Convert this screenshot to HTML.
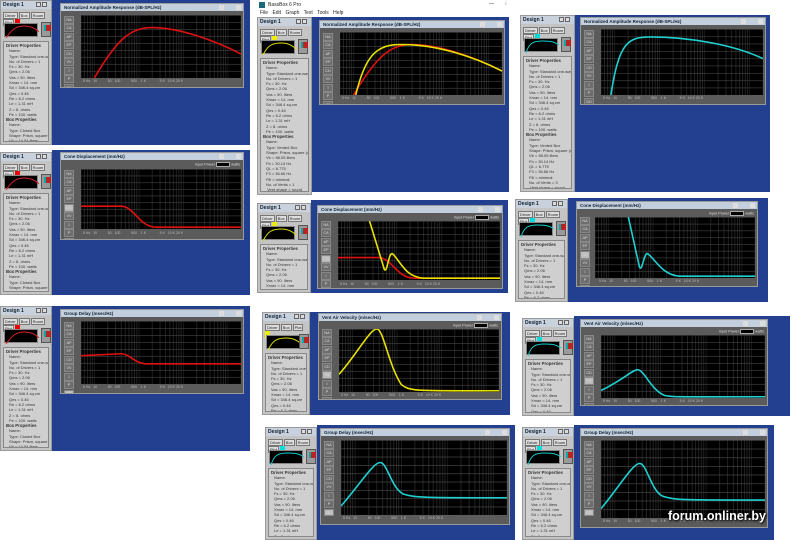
<!DOCTYPE html>
<html><head><meta charset="utf-8"><style>
*{margin:0;padding:0;box-sizing:border-box}
body{width:800px;height:540px;background:#fff;position:relative;overflow:hidden;font-family:"Liberation Sans",sans-serif}
.a{position:absolute}
.bl{position:absolute;background:#233f8f}
.sb{position:absolute;background:#c4c4c4;border:1px solid #9a9a9a;overflow:hidden}
.sb .t{height:8px;background:#c9d2dc;font-size:5px;font-weight:bold;line-height:8px;padding-left:2px;color:#123}
.sb .t i{position:absolute;top:1px;width:5px;height:5px;background:#ddd;border:1px solid #666}
.sb .bt{position:absolute;top:11px;left:2px;height:6px;font-size:4px;line-height:5px;color:#222}
.sb .bt span{display:inline-block;border:1px solid #777;background:#ddd;padding:0 1px;margin-right:1px}
.sb .th{position:absolute;top:22px;left:3px;width:34px;height:14px;background:#000;border:1px solid #888}
.sb .ic{position:absolute;top:21px;left:40px;width:10px;height:15px;background:#9a9a9a;border:1px solid #555}
.sb .ic:after{content:"";position:absolute;left:2px;top:2px;width:5px;height:6px;background:#b22;border-left:2px solid #0aa}
.sb .tx{position:absolute;top:40px;left:2px;right:2px;bottom:2px;background:#cfcfcf;border:1px solid #888;font-size:4px;line-height:5.3px;color:#333;padding:1px 5px 0 2px;white-space:nowrap;overflow:hidden}
.sb .tx b{display:block;font-size:4.3px}
.sb .tx p{padding-left:3px}
.win{position:absolute;background:#5b5b5b;box-shadow:inset 0 0 0 200px #5b5b5b;border:1px solid #9a9a9a;overflow:hidden}
.wt{height:7px;background:#c3cfdc;font-size:4.5px;font-weight:bold;line-height:7px;padding-left:3px;color:#123;position:relative}
.wt:after{content:"";position:absolute;right:2px;top:1px;width:12px;height:5px;border-left:5px solid #ddd;border-right:5px solid #ddd}
.win .bs{position:absolute;left:3px;top:12px;width:10px;font-size:3.8px;color:#ddd;text-align:center}
.win .bs div{height:7.6px;margin-bottom:0.9px;background:#6e6e6e;border:1px solid #888;line-height:6px}
.win .ip{position:absolute;right:3px;top:9px;font-size:3.8px;color:#ddd}
.win .ip span{display:inline-block;width:14px;height:5px;background:#000;border:1px solid #aaa;vertical-align:middle}
.win svg{position:absolute}
.win .ax{position:absolute;font-size:3.5px;color:#bbb;white-space:nowrap}
</style></head><body>
<svg width="0" height="0" style="position:absolute"><defs>
<pattern id="gv" patternUnits="userSpaceOnUse" width="100" height="100" patternTransform="translate(30.1 0)">
<g stroke="#3c3c3c" stroke-width="1.2"><line x1="0" y1="0" x2="0" y2="100" stroke="#555"/><line x1="30.1" y1="0" x2="30.1" y2="100"/><line x1="47.7" y1="0" x2="47.7" y2="100"/><line x1="60.2" y1="0" x2="60.2" y2="100"/><line x1="69.9" y1="0" x2="69.9" y2="100"/><line x1="77.8" y1="0" x2="77.8" y2="100"/><line x1="84.5" y1="0" x2="84.5" y2="100"/><line x1="90.3" y1="0" x2="90.3" y2="100"/><line x1="95.4" y1="0" x2="95.4" y2="100"/></g></pattern>
<pattern id="gh" patternUnits="userSpaceOnUse" width="360" height="11.1"><line x1="0" y1="0.5" x2="360" y2="0.5" stroke="#444" stroke-width="1"/></pattern>
</defs></svg>

<div class="a" style="left:252px;top:0;width:265px;height:17px;background:#fff"></div>
<div class="a" style="left:259px;top:2px;width:6px;height:6px;background:#1a6a7a"></div>
<div class="a" style="left:268px;top:2px;font-size:5px;color:#222">BassBox 6 Pro</div>
<div class="a" style="left:489px;top:1px;font-size:5px;color:#222">—&nbsp;&nbsp;&nbsp;&nbsp;&nbsp;&nbsp;&nbsp;&nbsp;⁝</div>
<div class="a" style="left:260px;top:10px;font-size:5px;color:#222;word-spacing:3px">File Edit Graph Text Tools Help</div>

<!-- P1 -->
<div class="bl" style="left:52px;top:0;width:198px;height:145px"></div>
<div class="sb" style="left:0;top:0;width:52px;height:145px"><div class="t">Design 1<i style="left:35px"></i><i style="left:41px"></i></div><div class="bt"><span>Driver</span><span>Box</span><span>Room</span><span>Plot</span><span style="background:#e00;border-color:#e00">&nbsp;</span></div><div class="th"><svg width="34" height="14" viewBox="0 0 34 14"><path d="M1,14 C8,4 12,2 20,2 C26,2 30,4 34,8" stroke="#d22" fill="none"/></svg></div><div class="ic"></div><div class="tx"><b>Driver Properties</b><p>Name:</p><p>Type: Standard one-way</p><p>No. of Drivers = 1</p><p>Fs = 30. Hz</p><p>Qms = 2.06</p><p>Vas = 90. liters</p><p>Xmax = 14. mm</p><p>Sd = 346.4 sq.cm</p><p>Qes = 0.46</p><p>Re = 6.2 ohms</p><p>Le = 1.31 mH</p><p>Z = 8. ohms</p><p>Pe = 100. watts</p><b>Box Properties</b><p>Name:</p><p>Type: Closed Box</p><p>Shape: Prism, square (opt</p><p>Vb = 14.54 liters</p><p>Qtc = 0.707</p><p>QL = 7.</p><p>F3 = 74.6 Hz</p></div></div>
<div class="win" style="left:60px;top:3px;width:184px;height:85px"><div class="wt">Normalized Amplitude Response (dB-SPL/Hz)</div><div class="bs"><div>NA</div><div>CA</div><div>AP</div><div>EP</div><div>CD</div><div>VV</div><div>I</div><div>P</div><div>GD</div></div>
<svg style="left:20px;top:11px" width="160" height="63" viewBox="0 0 360 100" preserveAspectRatio="none"><rect width="360" height="100" fill="#000"/><rect width="360" height="100" fill="url(#gv)"/><rect width="360" height="100" fill="url(#gh)"/><path d="M30,100 C80,40 110,20 160,20 C220,20 300,40 360,62" stroke="#e01010" stroke-width="1.6" fill="none" vector-effect="non-scaling-stroke"/></svg>
<div class="ax" style="left:22px;top:75px">5 Hz&nbsp;&nbsp;&nbsp;10&nbsp;&nbsp;&nbsp;&nbsp;&nbsp;&nbsp;&nbsp;&nbsp;&nbsp;&nbsp;&nbsp;50&nbsp;&nbsp;&nbsp;100&nbsp;&nbsp;&nbsp;&nbsp;&nbsp;&nbsp;&nbsp;&nbsp;&nbsp;&nbsp;&nbsp;500&nbsp;&nbsp;&nbsp;&nbsp;1 K&nbsp;&nbsp;&nbsp;&nbsp;&nbsp;&nbsp;&nbsp;&nbsp;&nbsp;&nbsp;&nbsp;&nbsp;&nbsp;&nbsp;5 K&nbsp;&nbsp;&nbsp;10 K 20 K</div></div>

<!-- P2 -->
<div class="bl" style="left:312px;top:17px;width:197px;height:175px"></div>
<div class="sb" style="left:257px;top:17px;width:55px;height:178px"><div class="t">Design 1<i style="left:38px"></i><i style="left:44px"></i></div><div class="bt"><span>Driver</span><span>Box</span><span>Room</span><span>Plot</span><span style="background:#ee0;border-color:#ee0">&nbsp;</span></div><div class="th"><svg width="34" height="14" viewBox="0 0 34 14"><path d="M1,14 C6,4 10,2 20,2 C26,2 30,4 34,8" stroke="#dd0" fill="none"/></svg></div><div class="ic"></div><div class="tx"><b>Driver Properties</b><p>Name:</p><p>Type: Standard one-way dri</p><p>No. of Drivers = 1</p><p>Fs = 30. Hz</p><p>Qms = 2.06</p><p>Vas = 90. liters</p><p>Xmax = 14. mm</p><p>Sd = 346.4 sq.cm</p><p>Qes = 0.46</p><p>Re = 6.2 ohms</p><p>Le = 1.31 mH</p><p>Z = 8. ohms</p><p>Pe = 100. watts</p><b>Box Properties</b><p>Name:</p><p>Type: Vented Box</p><p>Shape: Prism, square (optim</p><p>Vb = 58.05 liters</p><p>Fb = 30.14 Hz</p><p>QL = 6.775</p><p>F3 = 36.66 Hz</p><p>Fill = minimal</p><p>No. of Vents = 1</p><p>&nbsp;Vent shape = round</p><p>&nbsp;Vent ends = one flush</p><p>Dv = 50. mm</p><p>Lv = 66.34 mm</p></div></div>
<div class="win" style="left:319px;top:20px;width:186px;height:85px"><div class="wt">Normalized Amplitude Response (dB-SPL/Hz)</div><div class="bs"><div>NA</div><div>CA</div><div>AP</div><div>EP</div><div>CD</div><div>VV</div><div>I</div><div>P</div><div>GD</div></div>
<svg style="left:20px;top:11px" width="162" height="63" viewBox="0 0 360 100" preserveAspectRatio="none"><rect width="360" height="100" fill="#000"/><rect width="360" height="100" fill="url(#gv)"/><rect width="360" height="100" fill="url(#gh)"/><path d="M30,100 C80,40 110,20 160,20 C220,20 300,40 360,62" stroke="#e01010" stroke-width="1.6" fill="none" vector-effect="non-scaling-stroke"/><path d="M35,100 C55,40 80,20 130,20 C210,18 300,40 360,62" stroke="#e8e000" stroke-width="1.6" fill="none" vector-effect="non-scaling-stroke"/></svg>
<div class="ax" style="left:22px;top:75px">5 Hz&nbsp;&nbsp;&nbsp;10&nbsp;&nbsp;&nbsp;&nbsp;&nbsp;&nbsp;&nbsp;&nbsp;&nbsp;&nbsp;&nbsp;50&nbsp;&nbsp;&nbsp;100&nbsp;&nbsp;&nbsp;&nbsp;&nbsp;&nbsp;&nbsp;&nbsp;&nbsp;&nbsp;&nbsp;500&nbsp;&nbsp;&nbsp;&nbsp;1 K&nbsp;&nbsp;&nbsp;&nbsp;&nbsp;&nbsp;&nbsp;&nbsp;&nbsp;&nbsp;&nbsp;&nbsp;&nbsp;&nbsp;5 K&nbsp;&nbsp;&nbsp;10 K 20 K</div></div>

<!-- P3 -->
<div class="bl" style="left:575px;top:15px;width:195px;height:177px"></div>
<div class="sb" style="left:520px;top:15px;width:55px;height:177px"><div class="t">Design 1<i style="left:38px"></i><i style="left:44px"></i></div><div class="bt"><span>Driver</span><span>Box</span><span>Room</span><span>Plot</span><span style="background:#0dd;border-color:#0dd">&nbsp;</span></div><div class="th"><svg width="34" height="14" viewBox="0 0 34 14"><path d="M1,14 C4,4 8,2 18,2 C26,2 30,3 34,6" stroke="#1cc" fill="none"/></svg></div><div class="ic"></div><div class="tx"><b>Driver Properties</b><p>Name:</p><p>Type: Standard one-way dri</p><p>No. of Drivers = 1</p><p>Fs = 30. Hz</p><p>Qms = 2.06</p><p>Vas = 90. liters</p><p>Xmax = 14. mm</p><p>Sd = 346.4 sq.cm</p><p>Qes = 0.46</p><p>Re = 6.2 ohms</p><p>Le = 1.31 mH</p><p>Z = 8. ohms</p><p>Pe = 100. watts</p><b>Box Properties</b><p>Name:</p><p>Type: Vented Box</p><p>Shape: Prism, square (optim</p><p>Vb = 58.05 liters</p><p>Fb = 30.14 Hz</p><p>QL = 6.775</p><p>F3 = 36.66 Hz</p><p>Fill = minimal</p><p>No. of Vents = 3</p><p>&nbsp;Vent shape = round</p><p>&nbsp;Vent ends = one flush</p><p>Dv = 50. mm</p><p>Lv = 283.2 mm</p></div></div>
<div class="win" style="left:580px;top:17px;width:186px;height:88px"><div class="wt">Normalized Amplitude Response (dB-SPL/Hz)</div><div class="bs"><div>NA</div><div>CA</div><div>AP</div><div>EP</div><div>CD</div><div>VV</div><div>I</div><div>P</div><div>GD</div></div>
<svg style="left:20px;top:11px" width="162" height="66" viewBox="0 0 360 100" preserveAspectRatio="none"><rect width="360" height="100" fill="#000"/><rect width="360" height="100" fill="url(#gv)"/><rect width="360" height="100" fill="url(#gh)"/><path d="M22,100 C40,20 60,12 110,12 C200,12 300,25 360,45" stroke="#20d0d0" stroke-width="1.6" fill="none" vector-effect="non-scaling-stroke"/></svg>
<div class="ax" style="left:22px;top:78px">5 Hz&nbsp;&nbsp;&nbsp;10&nbsp;&nbsp;&nbsp;&nbsp;&nbsp;&nbsp;&nbsp;&nbsp;&nbsp;&nbsp;&nbsp;50&nbsp;&nbsp;&nbsp;100&nbsp;&nbsp;&nbsp;&nbsp;&nbsp;&nbsp;&nbsp;&nbsp;&nbsp;&nbsp;&nbsp;500&nbsp;&nbsp;&nbsp;&nbsp;1 K&nbsp;&nbsp;&nbsp;&nbsp;&nbsp;&nbsp;&nbsp;&nbsp;&nbsp;&nbsp;&nbsp;&nbsp;&nbsp;&nbsp;5 K&nbsp;&nbsp;&nbsp;10 K 20 K</div></div>

<!-- P4 -->
<div class="bl" style="left:52px;top:150px;width:198px;height:145px"></div>
<div class="sb" style="left:0;top:152px;width:52px;height:143px"><div class="t">Design 1<i style="left:35px"></i><i style="left:41px"></i></div><div class="bt"><span>Driver</span><span>Box</span><span>Room</span><span>Plot</span><span style="background:#e00;border-color:#e00">&nbsp;</span></div><div class="th"><svg width="34" height="14" viewBox="0 0 34 14"><path d="M1,14 C8,4 12,2 20,2 C26,2 30,4 34,8" stroke="#d22" fill="none"/></svg></div><div class="ic"></div><div class="tx"><b>Driver Properties</b><p>Name:</p><p>Type: Standard one-way</p><p>No. of Drivers = 1</p><p>Fs = 30. Hz</p><p>Qms = 2.06</p><p>Vas = 90. liters</p><p>Xmax = 14. mm</p><p>Sd = 346.4 sq.cm</p><p>Qes = 0.46</p><p>Re = 6.2 ohms</p><p>Le = 1.31 mH</p><p>Z = 8. ohms</p><p>Pe = 100. watts</p><b>Box Properties</b><p>Name:</p><p>Type: Closed Box</p><p>Shape: Prism, square (opt</p><p>Vb = 14.54 liters</p><p>Qtc = 0.707</p><p>QL = 7.</p><p>F3 = 74.6 Hz</p></div></div>
<div class="win" style="left:60px;top:152px;width:184px;height:88px"><div class="wt">Cone Displacement (mm/Hz)</div><div class="ip">Input Power <span></span> watts</div><div class="bs" style="top:17px"><div>NA</div><div>CA</div><div>AP</div><div>EP</div><div style="background:#bbb">CD</div><div>VV</div><div>I</div><div>P</div><div>GD</div></div>
<svg style="left:20px;top:16px" width="160" height="60" viewBox="0 0 360 100" preserveAspectRatio="none"><rect width="360" height="100" fill="#000"/><rect width="360" height="100" fill="url(#gv)"/><rect width="360" height="100" fill="url(#gh)"/><path d="M0,62 L90,62 C120,62 130,97 170,97 L360,97" stroke="#e01010" stroke-width="1.6" fill="none" vector-effect="non-scaling-stroke"/></svg>
<div class="ax" style="left:22px;top:78px">5 Hz&nbsp;&nbsp;&nbsp;10&nbsp;&nbsp;&nbsp;&nbsp;&nbsp;&nbsp;&nbsp;&nbsp;&nbsp;&nbsp;&nbsp;50&nbsp;&nbsp;&nbsp;100&nbsp;&nbsp;&nbsp;&nbsp;&nbsp;&nbsp;&nbsp;&nbsp;&nbsp;&nbsp;&nbsp;500&nbsp;&nbsp;&nbsp;&nbsp;1 K&nbsp;&nbsp;&nbsp;&nbsp;&nbsp;&nbsp;&nbsp;&nbsp;&nbsp;&nbsp;&nbsp;&nbsp;&nbsp;&nbsp;5 K&nbsp;&nbsp;&nbsp;10 K 20 K</div></div>

<!-- P5 -->
<div class="bl" style="left:311px;top:200px;width:197px;height:93px"></div>
<div class="sb" style="left:257px;top:203px;width:54px;height:90px"><div class="t">Design 1<i style="left:37px"></i><i style="left:43px"></i></div><div class="bt"><span>Driver</span><span>Box</span><span>Room</span><span>Plot</span><span style="background:#ee0;border-color:#ee0">&nbsp;</span></div><div class="th"><svg width="34" height="14" viewBox="0 0 34 14"><path d="M1,14 C6,4 10,2 20,2 C26,2 30,4 34,8" stroke="#dd0" fill="none"/></svg></div><div class="ic"></div><div class="tx"><b>Driver Properties</b><p>Name:</p><p>Type: Standard one-way dri</p><p>No. of Drivers = 1</p><p>Fs = 30. Hz</p><p>Qms = 2.06</p><p>Vas = 90. liters</p><p>Xmax = 14. mm</p><p>Sd = 346.4 sq.cm</p><p>Qes = 0.46</p><p>Re = 6.2 ohms</p></div></div>
<div class="win" style="left:317px;top:205px;width:186px;height:84px"><div class="wt">Cone Displacement (mm/Hz)</div><div class="ip">Input Power <span></span> watts</div><div class="bs" style="top:15px"><div>NA</div><div>CA</div><div>AP</div><div>EP</div><div style="background:#bbb">CD</div><div>VV</div><div>I</div><div>P</div><div>GD</div></div>
<svg style="left:20px;top:15px" width="162" height="59" viewBox="0 0 360 100" preserveAspectRatio="none"><rect width="360" height="100" fill="#000"/><rect width="360" height="100" fill="url(#gv)"/><rect width="360" height="100" fill="url(#gh)"/><path d="M0,62 L90,62 C120,62 130,97 170,97 L360,97" stroke="#e01010" stroke-width="1.6" fill="none" vector-effect="non-scaling-stroke"/><path d="M70,0 L103,82 C110,90 112,50 122,56 C140,70 150,95 190,97 L360,97" stroke="#e8e000" stroke-width="1.6" fill="none" vector-effect="non-scaling-stroke"/></svg>
<div class="ax" style="left:22px;top:76px">5 Hz&nbsp;&nbsp;&nbsp;10&nbsp;&nbsp;&nbsp;&nbsp;&nbsp;&nbsp;&nbsp;&nbsp;&nbsp;&nbsp;&nbsp;50&nbsp;&nbsp;&nbsp;100&nbsp;&nbsp;&nbsp;&nbsp;&nbsp;&nbsp;&nbsp;&nbsp;&nbsp;&nbsp;&nbsp;500&nbsp;&nbsp;&nbsp;&nbsp;1 K&nbsp;&nbsp;&nbsp;&nbsp;&nbsp;&nbsp;&nbsp;&nbsp;&nbsp;&nbsp;&nbsp;&nbsp;&nbsp;&nbsp;5 K&nbsp;&nbsp;&nbsp;10 K 20 K</div></div>

<!-- P6 -->
<div class="bl" style="left:568px;top:198px;width:200px;height:104px"></div>
<div class="sb" style="left:515px;top:199px;width:53px;height:103px"><div class="t">Design 1<i style="left:36px"></i><i style="left:42px"></i></div><div class="bt"><span>Driver</span><span>Box</span><span>Room</span><span>Plot</span><span style="background:#0dd;border-color:#0dd">&nbsp;</span></div><div class="th"><svg width="34" height="14" viewBox="0 0 34 14"><path d="M1,14 C4,4 8,2 18,2 C26,2 30,3 34,6" stroke="#1cc" fill="none"/></svg></div><div class="ic"></div><div class="tx"><b>Driver Properties</b><p>Name:</p><p>Type: Standard one-way dri</p><p>No. of Drivers = 1</p><p>Fs = 30. Hz</p><p>Qms = 2.06</p><p>Vas = 90. liters</p><p>Xmax = 14. mm</p><p>Sd = 346.4 sq.cm</p><p>Qes = 0.46</p><p>Re = 6.2 ohms</p><p>Le = 1.31 mH</p><p>Z = 8. ohms</p><p>Pe = 100. watts</p></div></div>
<div class="win" style="left:576px;top:201px;width:182px;height:86px"><div class="wt">Cone Displacement (mm/Hz)</div><div class="ip">Input Power <span></span> watts</div><div class="bs" style="top:15px"><div>NA</div><div>CA</div><div>AP</div><div>EP</div><div style="background:#bbb">CD</div><div>VV</div><div>I</div><div>P</div><div>GD</div></div>
<svg style="left:18px;top:15px" width="160" height="61" viewBox="0 0 360 100" preserveAspectRatio="none"><rect width="360" height="100" fill="#000"/><rect width="360" height="100" fill="url(#gv)"/><rect width="360" height="100" fill="url(#gh)"/><path d="M75,0 L100,82 C106,92 110,58 118,60 C135,68 150,95 190,97 L360,97" stroke="#20d0d0" stroke-width="1.6" fill="none" vector-effect="non-scaling-stroke"/></svg>
<div class="ax" style="left:22px;top:77px">5 Hz&nbsp;&nbsp;&nbsp;10&nbsp;&nbsp;&nbsp;&nbsp;&nbsp;&nbsp;&nbsp;&nbsp;&nbsp;&nbsp;&nbsp;50&nbsp;&nbsp;&nbsp;100&nbsp;&nbsp;&nbsp;&nbsp;&nbsp;&nbsp;&nbsp;&nbsp;&nbsp;&nbsp;&nbsp;500&nbsp;&nbsp;&nbsp;&nbsp;1 K&nbsp;&nbsp;&nbsp;&nbsp;&nbsp;&nbsp;&nbsp;&nbsp;&nbsp;&nbsp;&nbsp;&nbsp;&nbsp;&nbsp;5 K&nbsp;&nbsp;&nbsp;10 K 20 K</div></div>

<!-- P7 -->
<div class="bl" style="left:52px;top:306px;width:198px;height:145px"></div>
<div class="sb" style="left:0;top:306px;width:52px;height:145px"><div class="t">Design 1<i style="left:35px"></i><i style="left:41px"></i></div><div class="bt"><span>Driver</span><span>Box</span><span>Room</span><span>Plot</span><span style="background:#e00;border-color:#e00">&nbsp;</span></div><div class="th"><svg width="34" height="14" viewBox="0 0 34 14"><path d="M1,14 C8,4 12,2 20,2 C26,2 30,4 34,8" stroke="#d22" fill="none"/></svg></div><div class="ic"></div><div class="tx"><b>Driver Properties</b><p>Name:</p><p>Type: Standard one-way</p><p>No. of Drivers = 1</p><p>Fs = 30. Hz</p><p>Qms = 2.06</p><p>Vas = 90. liters</p><p>Xmax = 14. mm</p><p>Sd = 346.4 sq.cm</p><p>Qes = 0.46</p><p>Re = 6.2 ohms</p><p>Le = 1.31 mH</p><p>Z = 8. ohms</p><p>Pe = 100. watts</p><b>Box Properties</b><p>Name:</p><p>Type: Closed Box</p><p>Shape: Prism, square (opt</p><p>Vb = 14.54 liters</p><p>Qtc = 0.707</p><p>QL = 7.</p><p>F3 = 74.6 Hz</p></div></div>
<div class="win" style="left:60px;top:309px;width:184px;height:85px"><div class="wt">Group Delay (msec/Hz)</div><div class="bs"><div>NA</div><div>CA</div><div>AP</div><div>EP</div><div>CD</div><div>VV</div><div>I</div><div>P</div><div style="background:#bbb">GD</div></div>
<svg style="left:20px;top:11px" width="160" height="63" viewBox="0 0 360 100" preserveAspectRatio="none"><rect width="360" height="100" fill="#000"/><rect width="360" height="100" fill="url(#gv)"/><rect width="360" height="100" fill="url(#gh)"/><path d="M0,55 L90,52 C110,52 120,68 150,68 L360,68" stroke="#e01010" stroke-width="1.6" fill="none" vector-effect="non-scaling-stroke"/></svg>
<div class="ax" style="left:22px;top:75px">5 Hz&nbsp;&nbsp;&nbsp;10&nbsp;&nbsp;&nbsp;&nbsp;&nbsp;&nbsp;&nbsp;&nbsp;&nbsp;&nbsp;&nbsp;50&nbsp;&nbsp;&nbsp;100&nbsp;&nbsp;&nbsp;&nbsp;&nbsp;&nbsp;&nbsp;&nbsp;&nbsp;&nbsp;&nbsp;500&nbsp;&nbsp;&nbsp;&nbsp;1 K&nbsp;&nbsp;&nbsp;&nbsp;&nbsp;&nbsp;&nbsp;&nbsp;&nbsp;&nbsp;&nbsp;&nbsp;&nbsp;&nbsp;5 K&nbsp;&nbsp;&nbsp;10 K 20 K</div></div>

<!-- P8 -->
<div class="bl" style="left:310px;top:312px;width:200px;height:103px"></div>
<div class="sb" style="left:262px;top:312px;width:48px;height:103px"><div class="t">Design 1<i style="left:31px"></i><i style="left:37px"></i></div><div class="bt"><span>Driver</span><span>Box</span><span>Plot</span><span style="background:#ee0;border-color:#ee0">&nbsp;</span></div><div class="th"><svg width="34" height="14" viewBox="0 0 34 14"><path d="M1,14 C6,4 10,2 20,2 C26,2 30,4 34,8" stroke="#dd0" fill="none"/></svg></div><div class="ic" style="left:36px"></div><div class="tx"><b>Driver Properties</b><p>Name:</p><p>Type: Standard one-way dri</p><p>No. of Drivers = 1</p><p>Fs = 30. Hz</p><p>Qms = 2.06</p><p>Vas = 90. liters</p><p>Xmax = 14. mm</p><p>Sd = 346.4 sq.cm</p><p>Qes = 0.46</p><p>Re = 6.2 ohms</p><p>Le = 1.31 mH</p><p>Z = 8. ohms</p><p>Pe = 100. watts</p></div></div>
<div class="win" style="left:318px;top:313px;width:184px;height:87px"><div class="wt">Vent Air Velocity (m/sec/Hz)</div><div class="ip">Input Power <span></span> watts</div><div class="bs" style="top:15px"><div>NA</div><div>CA</div><div>AP</div><div>EP</div><div>CD</div><div style="background:#bbb">VV</div><div>I</div><div>P</div><div>GD</div></div>
<svg style="left:20px;top:15px" width="160" height="63" viewBox="0 0 360 100" preserveAspectRatio="none"><rect width="360" height="100" fill="#000"/><rect width="360" height="100" fill="url(#gv)"/><rect width="360" height="100" fill="url(#gh)"/><path d="M0,72 C40,40 70,0 85,0 C100,0 110,55 140,88 C160,100 180,98 360,98" stroke="#e8e000" stroke-width="1.6" fill="none" vector-effect="non-scaling-stroke"/></svg>
<div class="ax" style="left:22px;top:79px">5 Hz&nbsp;&nbsp;&nbsp;10&nbsp;&nbsp;&nbsp;&nbsp;&nbsp;&nbsp;&nbsp;&nbsp;&nbsp;&nbsp;&nbsp;50&nbsp;&nbsp;&nbsp;100&nbsp;&nbsp;&nbsp;&nbsp;&nbsp;&nbsp;&nbsp;&nbsp;&nbsp;&nbsp;&nbsp;500&nbsp;&nbsp;&nbsp;&nbsp;1 K&nbsp;&nbsp;&nbsp;&nbsp;&nbsp;&nbsp;&nbsp;&nbsp;&nbsp;&nbsp;&nbsp;&nbsp;&nbsp;&nbsp;5 K&nbsp;&nbsp;&nbsp;10 K 20 K</div></div>

<!-- P9 -->
<div class="bl" style="left:574px;top:316px;width:216px;height:100px"></div>
<div class="sb" style="left:522px;top:318px;width:52px;height:98px"><div class="t">Design 1<i style="left:35px"></i><i style="left:41px"></i></div><div class="bt"><span>Driver</span><span>Box</span><span>Room</span><span>Plot</span><span style="background:#0dd;border-color:#0dd">&nbsp;</span></div><div class="th"><svg width="34" height="14" viewBox="0 0 34 14"><path d="M1,14 C4,4 8,2 18,2 C26,2 30,3 34,6" stroke="#1cc" fill="none"/></svg></div><div class="ic"></div><div class="tx"><b>Driver Properties</b><p>Name:</p><p>Type: Standard one-way dri</p><p>No. of Drivers = 1</p><p>Fs = 30. Hz</p><p>Qms = 2.06</p><p>Vas = 90. liters</p><p>Xmax = 14. mm</p><p>Sd = 346.4 sq.cm</p><p>Qes = 0.46</p><p>Re = 6.2 ohms</p><p>Le = 1.31 mH</p><p>Z = 8. ohms</p></div></div>
<div class="win" style="left:580px;top:319px;width:188px;height:87px"><div class="wt">Vent Air Velocity (m/sec/Hz)</div><div class="ip">Input Power <span></span> watts</div><div class="bs" style="top:15px"><div>NA</div><div>CA</div><div>AP</div><div>EP</div><div>CD</div><div style="background:#bbb">VV</div><div>I</div><div>P</div><div>GD</div></div>
<svg style="left:20px;top:15px" width="164" height="63" viewBox="0 0 360 100" preserveAspectRatio="none"><rect width="360" height="100" fill="#000"/><rect width="360" height="100" fill="url(#gv)"/><rect width="360" height="100" fill="url(#gh)"/><path d="M0,88 C40,75 70,55 80,55 C95,55 110,88 140,96 C160,99 180,98 360,98" stroke="#20d0d0" stroke-width="1.6" fill="none" vector-effect="non-scaling-stroke"/></svg>
<div class="ax" style="left:22px;top:79px">5 Hz&nbsp;&nbsp;&nbsp;10&nbsp;&nbsp;&nbsp;&nbsp;&nbsp;&nbsp;&nbsp;&nbsp;&nbsp;&nbsp;&nbsp;50&nbsp;&nbsp;&nbsp;100&nbsp;&nbsp;&nbsp;&nbsp;&nbsp;&nbsp;&nbsp;&nbsp;&nbsp;&nbsp;&nbsp;500&nbsp;&nbsp;&nbsp;&nbsp;1 K&nbsp;&nbsp;&nbsp;&nbsp;&nbsp;&nbsp;&nbsp;&nbsp;&nbsp;&nbsp;&nbsp;&nbsp;&nbsp;&nbsp;5 K&nbsp;&nbsp;&nbsp;10 K 20 K</div></div>

<!-- P10 -->
<div class="bl" style="left:317px;top:425px;width:198px;height:115px"></div>
<div class="sb" style="left:265px;top:427px;width:52px;height:113px"><div class="t">Design 1<i style="left:35px"></i><i style="left:41px"></i></div><div class="bt"><span>Driver</span><span>Box</span><span>Room</span><span>Plot</span><span style="background:#0dd;border-color:#0dd">&nbsp;</span></div><div class="th"><svg width="34" height="14" viewBox="0 0 34 14"><path d="M1,14 C4,4 8,2 18,2 C26,2 30,3 34,6" stroke="#1cc" fill="none"/></svg></div><div class="ic"></div><div class="tx"><b>Driver Properties</b><p>Name:</p><p>Type: Standard one-way dri</p><p>No. of Drivers = 1</p><p>Fs = 30. Hz</p><p>Qms = 2.06</p><p>Vas = 90. liters</p><p>Xmax = 14. mm</p><p>Sd = 346.4 sq.cm</p><p>Qes = 0.46</p><p>Re = 6.2 ohms</p><p>Le = 1.31 mH</p><p>Z = 8. ohms</p><p>Pe = 100. watts</p></div></div>
<div class="win" style="left:320px;top:428px;width:190px;height:97px"><div class="wt">Group Delay (msec/Hz)</div><div class="bs"><div>NA</div><div>CA</div><div>AP</div><div>EP</div><div>CD</div><div>VV</div><div>I</div><div>P</div><div style="background:#bbb">GD</div></div>
<svg style="left:20px;top:11px" width="166" height="75" viewBox="0 0 360 100" preserveAspectRatio="none"><rect width="360" height="100" fill="#000"/><rect width="360" height="100" fill="url(#gv)"/><rect width="360" height="100" fill="url(#gh)"/><path d="M0,88 C40,60 70,30 85,30 C100,30 110,65 135,72 C160,77 180,77 360,77" stroke="#20d0d0" stroke-width="1.6" fill="none" vector-effect="non-scaling-stroke"/></svg>
<div class="ax" style="left:22px;top:87px">5 Hz&nbsp;&nbsp;&nbsp;10&nbsp;&nbsp;&nbsp;&nbsp;&nbsp;&nbsp;&nbsp;&nbsp;&nbsp;&nbsp;&nbsp;50&nbsp;&nbsp;&nbsp;100&nbsp;&nbsp;&nbsp;&nbsp;&nbsp;&nbsp;&nbsp;&nbsp;&nbsp;&nbsp;&nbsp;500&nbsp;&nbsp;&nbsp;&nbsp;1 K&nbsp;&nbsp;&nbsp;&nbsp;&nbsp;&nbsp;&nbsp;&nbsp;&nbsp;&nbsp;&nbsp;&nbsp;&nbsp;&nbsp;5 K&nbsp;&nbsp;&nbsp;10 K 20 K</div></div>

<!-- P11 -->
<div class="bl" style="left:574px;top:425px;width:200px;height:115px"></div>
<div class="sb" style="left:522px;top:427px;width:52px;height:113px"><div class="t">Design 1<i style="left:35px"></i><i style="left:41px"></i></div><div class="bt"><span>Driver</span><span>Box</span><span>Room</span><span>Plot</span><span style="background:#0dd;border-color:#0dd">&nbsp;</span></div><div class="th"><svg width="34" height="14" viewBox="0 0 34 14"><path d="M1,14 C4,4 8,2 18,2 C26,2 30,3 34,6" stroke="#1cc" fill="none"/></svg></div><div class="ic"></div><div class="tx"><b>Driver Properties</b><p>Name:</p><p>Type: Standard one-way dri</p><p>No. of Drivers = 1</p><p>Fs = 30. Hz</p><p>Qms = 2.06</p><p>Vas = 90. liters</p><p>Xmax = 14. mm</p><p>Sd = 346.4 sq.cm</p><p>Qes = 0.46</p><p>Re = 6.2 ohms</p><p>Le = 1.31 mH</p><p>Z = 8. ohms</p><p>Pe = 100. watts</p></div></div>
<div class="win" style="left:580px;top:428px;width:188px;height:100px"><div class="wt">Group Delay (msec/Hz)</div><div class="bs"><div>NA</div><div>CA</div><div>AP</div><div>EP</div><div>CD</div><div>VV</div><div>I</div><div>P</div><div style="background:#bbb">GD</div></div>
<svg style="left:20px;top:11px" width="164" height="78" viewBox="0 0 360 100" preserveAspectRatio="none"><rect width="360" height="100" fill="#000"/><rect width="360" height="100" fill="url(#gv)"/><rect width="360" height="100" fill="url(#gh)"/><path d="M0,88 C40,60 70,30 85,30 C100,30 110,65 135,72 C160,77 180,77 360,77" stroke="#20d0d0" stroke-width="1.6" fill="none" vector-effect="non-scaling-stroke"/></svg>
<div class="ax" style="left:22px;top:90px">5 Hz&nbsp;&nbsp;&nbsp;10&nbsp;&nbsp;&nbsp;&nbsp;&nbsp;&nbsp;&nbsp;&nbsp;&nbsp;&nbsp;&nbsp;50&nbsp;&nbsp;&nbsp;100&nbsp;&nbsp;&nbsp;&nbsp;&nbsp;&nbsp;&nbsp;&nbsp;&nbsp;&nbsp;&nbsp;500&nbsp;&nbsp;&nbsp;&nbsp;1 K&nbsp;&nbsp;&nbsp;&nbsp;&nbsp;&nbsp;&nbsp;&nbsp;&nbsp;&nbsp;&nbsp;&nbsp;&nbsp;&nbsp;5 K&nbsp;&nbsp;&nbsp;10 K 20 K</div></div>

<div class="a" style="left:668px;top:509px;font-size:12.5px;font-weight:bold;color:#fff;text-shadow:0 0 2px #000,1px 1px 2px #000;white-space:nowrap">forum.onliner.by</div>
</body></html>
